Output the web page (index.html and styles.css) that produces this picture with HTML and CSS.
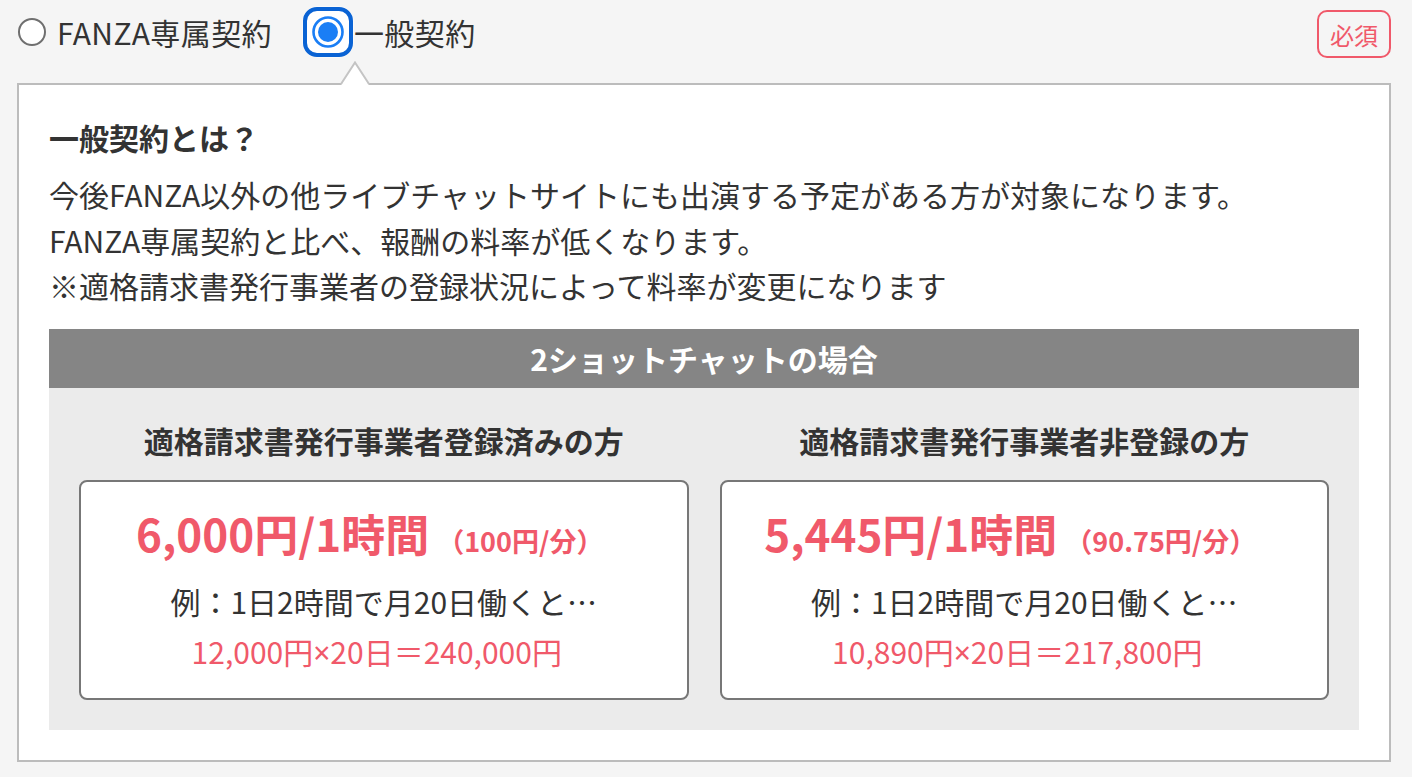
FILE: index.html
```html
<!DOCTYPE html>
<html lang="ja">
<head>
<meta charset="utf-8">
<link rel="stylesheet" href="styles.css">
</head>
<body>
<div class="wrap">
  <div class="top-row">
    <div class="radios">
      <label class="radio">
        <span class="radio-off"></span>
        <span class="radio-label">FANZA専属契約</span>
      </label>
      <label class="radio radio-selected">
        <svg class="radio-on" width="52" height="52" viewBox="0 0 52 52">
          <rect x="0.5" y="0.5" width="51" height="51" rx="15" fill="#ffffff"/>
          <rect x="3" y="3" width="46" height="46" rx="12" fill="#ffffff" stroke="#0a63d4" stroke-width="4"/>
          <circle cx="26" cy="26" r="14.5" fill="#ffffff" stroke="#1a7ef5" stroke-width="2.6"/>
          <circle cx="26" cy="26" r="10" fill="#1a7ef5"/>
        </svg>
        <span class="radio-label">一般契約</span>
      </label>
    </div>
    <span class="badge">必須</span>
  </div>

  <div class="panel">
    <svg class="notch" width="30" height="26" viewBox="0 0 30 26">
      <polygon points="0,26 15,1 30,26" fill="#ffffff"/>
      <polyline points="1,23 15,1.5 29,23" fill="none" stroke="#c4c4c4" stroke-width="2"/>
    </svg>
    <h2 class="panel-title">一般契約とは？</h2>
    <p class="desc">今後FANZA以外の他ライブチャットサイトにも出演する予定がある方が対象になります。<br>FANZA専属契約と比べ、報酬の料率が低くなります。<br>※適格請求書発行事業者の登録状況によって料率が変更になります</p>

    <div class="rate">
      <div class="rate-head">2ショットチャットの場合</div>
      <div class="rate-body">
        <div class="rate-col">
          <h3 class="col-title">適格請求書発行事業者登録済みの方</h3>
          <div class="card">
            <p class="price"><span class="price-main">6,000円/1時間</span><span class="price-sub">（100円/分）</span></p>
            <p class="example">例：1日2時間で月20日働くと…</p>
            <p class="calc">12,000円<span class="times">×</span>20日＝240,000円</p>
          </div>
        </div>
        <div class="rate-col">
          <h3 class="col-title">適格請求書発行事業者非登録の方</h3>
          <div class="card">
            <p class="price"><span class="price-main">5,445円/1時間</span><span class="price-sub">（90.75円/分）</span></p>
            <p class="example">例：1日2時間で月20日働くと…</p>
            <p class="calc">10,890円<span class="times">×</span>20日＝217,800円</p>
          </div>
        </div>
      </div>
    </div>
  </div>
</div>
</body>
</html>
```

FILE: styles.css
```css
* {
  box-sizing: border-box;
}

html, body {
  margin: 0;
  padding: 0;
  background: #f5f5f5;
}

body {
  font-family: "Noto Sans CJK JP", "Noto Sans", sans-serif;
  color: #333333;
  font-size: 30px;
}

.wrap {
  padding: 0 21px 0 17px;
}

.top-row {
  height: 83px;
  display: flex;
  align-items: flex-start;
  justify-content: space-between;
  padding-top: 8px;
}

.radios {
  display: flex;
  align-items: center;
  height: 48px;
}

.radio {
  display: flex;
  align-items: center;
  line-height: 48px;
}

.radio-off {
  width: 28px;
  height: 28px;
  border-radius: 50%;
  border: 2px solid #6f6f6f;
  background: #ffffff;
  margin-left: 1px;
  margin-right: 11px;
}

.radio-label {
  font-size: 30px;
  color: #333333;
  letter-spacing: 0.4px;
}

.radio-selected {
  margin-left: 30px;
}

.radio-on {
  display: block;
  margin-top: 0;
}

.badge {
  display: flex;
  align-items: center;
  height: 48px;
  margin-top: 2px;
  padding: 0 11px;
  border: 2px solid #f0596a;
  border-radius: 10px;
  color: #f0596a;
  font-size: 24px;
}

.panel {
  position: relative;
  background: #ffffff;
  border: 2px solid #bcbcbc;
  padding: 30px 30px 30px 30px;
}

.notch {
  position: absolute;
  left: 321px;
  top: -24px;
  display: block;
}

.panel-title {
  margin: 0;
  font-size: 30px;
  font-weight: 700;
  line-height: 45px;
  color: #333333;
}

.desc {
  margin: 12px 0 0;
  font-size: 30px;
  line-height: 45.5px;
  color: #333333;
}

.rate {
  margin-top: 20px;
}

.rate-head {
  height: 59px;
  background: #858585;
  color: #ffffff;
  font-weight: 700;
  font-size: 30px;
  display: flex;
  align-items: center;
  justify-content: center;
}

.rate-body {
  background: #ebebeb;
  padding: 30px 30px 30px;
  display: grid;
  grid-template-columns: 1fr 1fr;
  column-gap: 31px;
}

.col-title {
  margin: 0;
  font-size: 30px;
  font-weight: 700;
  line-height: 45px;
  text-align: center;
  color: #333333;
}

.card {
  margin-top: 17px;
  height: 220px;
  background: #ffffff;
  border: 2px solid #777777;
  border-radius: 8px;
  padding-top: 21px;
  text-align: center;
}

.card p {
  margin: 0;
}

.price {
  line-height: 60px;
  color: #f0596a;
  font-weight: 700;
  padding-right: 28px;
  white-space: nowrap;
}

.price-main {
  font-size: 44px;
}

.price-sub {
  font-size: 27px;
  margin-left: 8px;
}

.example {
  margin-top: 8px !important;
  line-height: 44px;
  font-size: 30px;
  color: #333333;
}

.calc {
  margin-top: 6px !important;
  line-height: 44px;
  font-size: 30px;
  color: #f0596a;
  padding-right: 14px;
}

.times {
  font-family: "Noto Sans", "DejaVu Sans", sans-serif;
}
```
